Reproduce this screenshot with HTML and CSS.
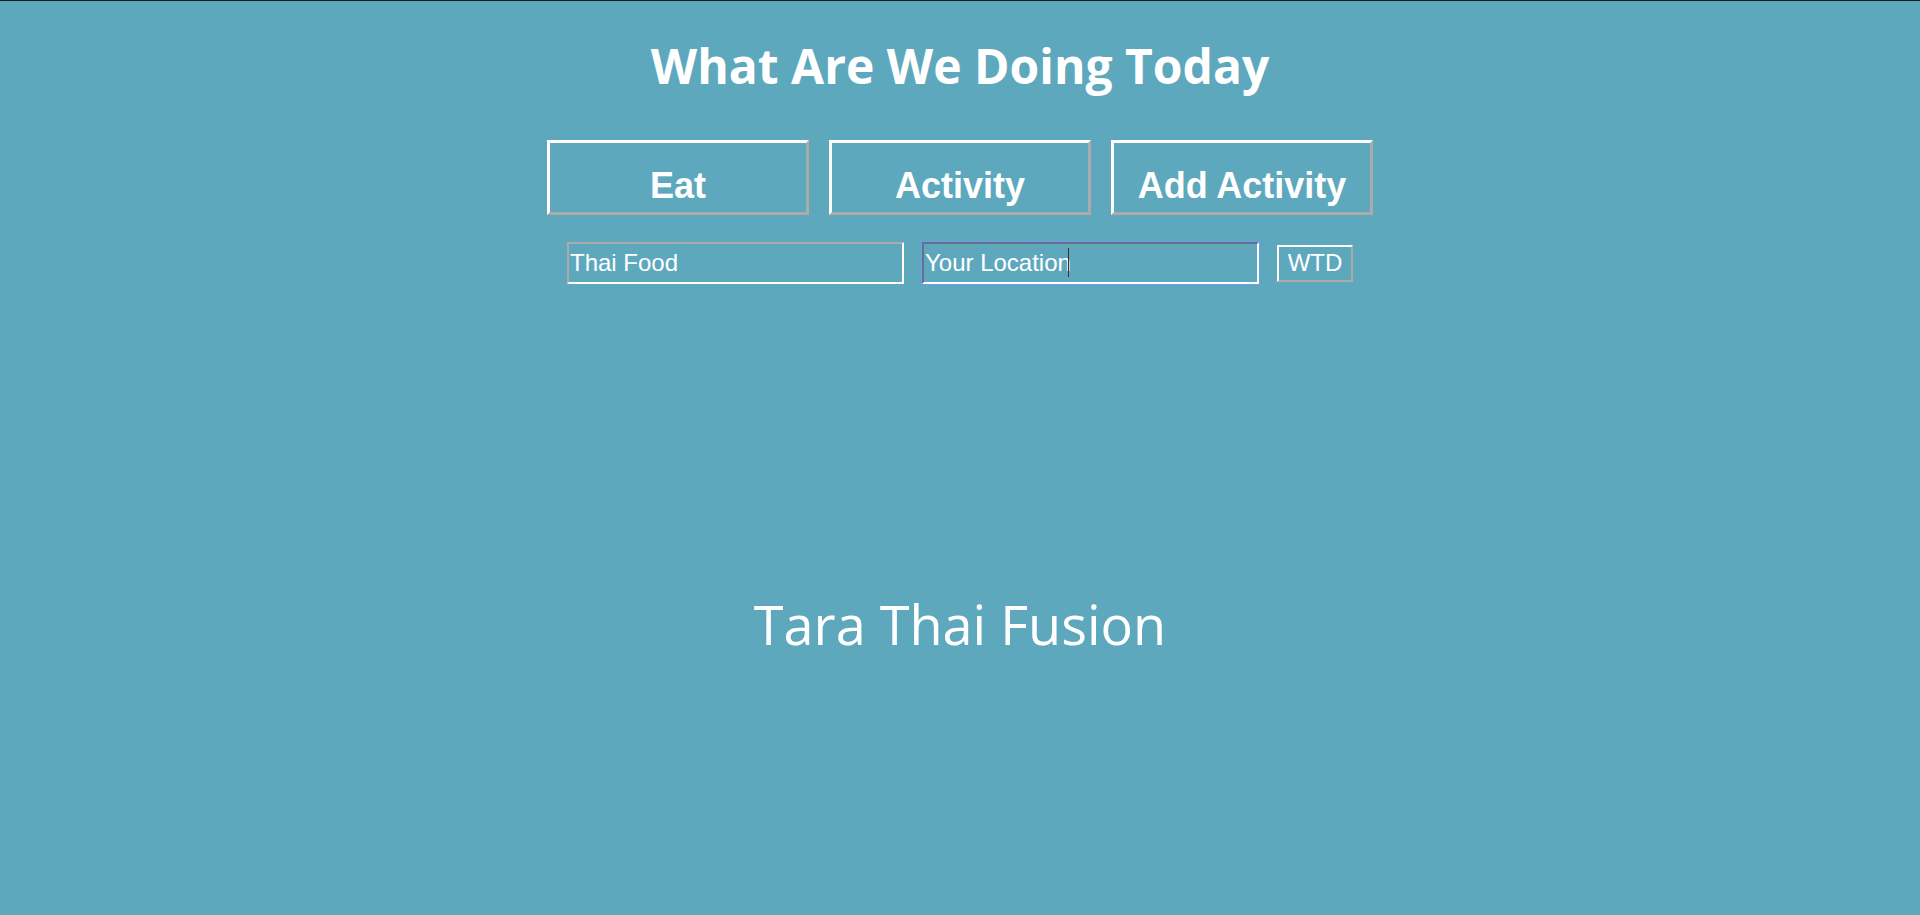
FILE: index.html
```html
<!DOCTYPE html>
<html lang="en">
<head>
<meta charset="utf-8">
<title>What Are We Doing Today</title>
<link rel="stylesheet" href="styles.css">
</head>
<body>
<main class="page">
  <h1 class="title">What Are We Doing Today</h1>
  <div class="modes">
    <button class="mode-btn" type="button">Eat</button>
    <button class="mode-btn" type="button">Activity</button>
    <button class="mode-btn" type="button">Add Activity</button>
  </div>
  <form class="search" onsubmit="return false;">
    <input class="field" type="text" value="Thai Food">
    <span class="field-wrap">
      <input class="field field-focus" type="text" value="Your Location">
      <span class="caret"></span>
    </span>
    <button class="go-btn" type="submit">WTD</button>
  </form>
  <p class="result">Tara Thai Fusion</p>
</main>
</body>
</html>
```

FILE: styles.css
```css
html, body {
  margin: 0;
  padding: 0;
  height: 100%;
}
body {
  background: #5ea8be;
  border-top: 1px solid #1c1c1c;
  box-sizing: border-box;
  color: #fff;
}
.page {
  display: flex;
  flex-direction: column;
  align-items: center;
}
.title {
  margin: 32px 0 0;
  font-family: "Open Sans", sans-serif;
  font-weight: 700;
  font-size: 48px;
  line-height: 65px;
  color: #fff;
}
.modes {
  display: flex;
  gap: 20px;
  margin-top: 42px;
}
.mode-btn {
  box-sizing: border-box;
  width: 262px;
  height: 75px;
  padding: 22px 0 6px;
  margin: 0;
  background: transparent;
  border: 3px outset #fff;
  color: #fff;
  font-family: "Liberation Sans", Arial, sans-serif;
  font-weight: 700;
  font-size: 36px;
  line-height: 41px;
}
.search {
  display: flex;
  align-items: center;
  gap: 18px;
  margin-top: 27px;
}
.field-wrap {
  position: relative;
  display: flex;
}
.field {
  box-sizing: border-box;
  width: 337px;
  height: 42px;
  margin: 0;
  padding: 1px 0 1px 1px;
  background: transparent;
  border: 2px inset #fff;
  color: #fff;
  font-family: "Liberation Sans", Arial, sans-serif;
  font-size: 24px;
}
.field-focus {
  outline: 1px solid #6d9cf2;
  outline-offset: 0;
  border-color: #a9b9d8 #fff #fff #a9b9d8;
}
.caret {
  position: absolute;
  left: 146px;
  top: 6px;
  width: 1px;
  height: 29px;
  background: #333;
}
.go-btn {
  box-sizing: border-box;
  width: 76px;
  height: 37px;
  margin: 0;
  padding: 0;
  background: transparent;
  border: 2px outset #fff;
  color: #fff;
  font-family: "Liberation Sans", Arial, sans-serif;
  font-size: 24px;
  line-height: 28px;
}
.result {
  margin: 304px 0 0;
  font-family: "Open Sans", sans-serif;
  font-weight: 400;
  font-size: 54px;
  line-height: 73px;
  color: #fff;
}
```
